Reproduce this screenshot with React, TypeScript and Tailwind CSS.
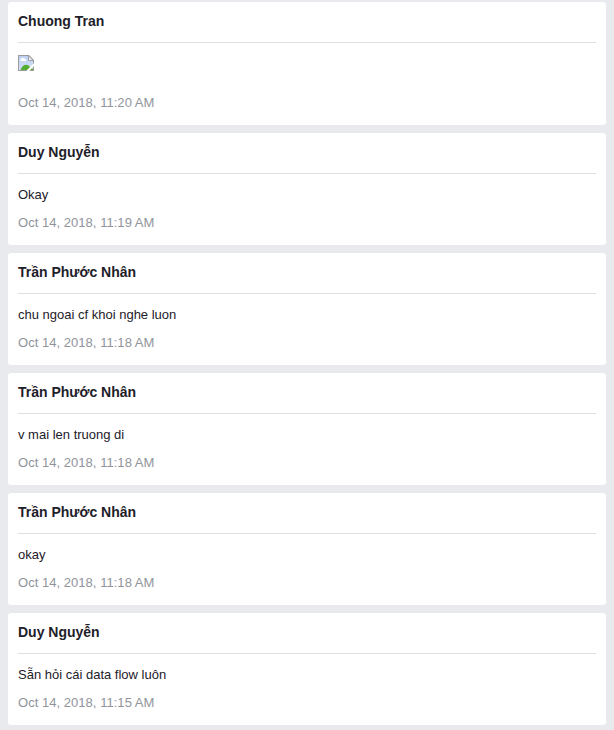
type Message = { sender: string; text?: string; time: string };

const messages: Message[] = [
  { sender: "Chuong Tran", time: "Oct 14, 2018, 11:20 AM" },
  { sender: "Duy Nguyễn", text: "Okay", time: "Oct 14, 2018, 11:19 AM" },
  { sender: "Trần Phước Nhân", text: "chu ngoai cf khoi nghe luon", time: "Oct 14, 2018, 11:18 AM" },
  { sender: "Trần Phước Nhân", text: "v mai len truong di", time: "Oct 14, 2018, 11:18 AM" },
  { sender: "Trần Phước Nhân", text: "okay", time: "Oct 14, 2018, 11:18 AM" },
  { sender: "Duy Nguyễn", text: "Sẵn hỏi cái data flow luôn", time: "Oct 14, 2018, 11:15 AM" },
];

function BrokenImage() {
  return (
    <svg className="block h-4 w-4" viewBox="0 0 16 16">
      <defs>
        <linearGradient id="sky" x1="0" y1="0" x2="0" y2="1">
          <stop offset="0" stopColor="#bfd0f3" />
          <stop offset="1" stopColor="#d3e0fa" />
        </linearGradient>
      </defs>
      <path d="M0 0h11l5 5v11H0z" fill="#9b9b9b" />
      <path d="M1 1h9.6L15 5.4V15H1z" fill="url(#sky)" />
      <path d="M10.500 .8V5.500h4.700z" fill="#f2f2f2" stroke="#9b9b9b" strokeWidth=".9" />
      <path d="M2.500 6a1.300 1.300 0 0 1 .7-2 1.800 1.800 0 0 1 3.400-.2A1.300 1.300 0 0 1 7.800 6z" fill="#fff" />
      <path d="M2.500 15q1.500-4.500 5-5.200 3-.2 4.500 2.200l3 2v1z" fill="#55ad36" />
      <path d="M16 8v3L11.500 15.800V16H8.200z" fill="#fff" />
    </svg>
  );
}

function Card({ message }: { message: Message }) {
  return (
    <article className="rounded-[3px] bg-white px-2.5">
      <h2 className="h-[41px] border-b border-[#dddfe2] pt-[10px] text-sm leading-[18px] font-bold text-[#1d2129]">
        {message.sender}
      </h2>
      <div className={message.text ? "h-10 pt-3 text-[13px] leading-[18px] text-[#1d2129]" : "h-[51px] pt-3"}>
        {message.text ?? <BrokenImage />}
      </div>
      <p className="h-[31px] text-[13px] leading-[18px] tracking-[0.035px] text-[#90949c]">{message.time}</p>
    </article>
  );
}

export default function App() {
  return (
    <main className="flex h-[730px] flex-col gap-2 overflow-hidden bg-[#e9eaed] px-2 pt-[2px] font-['Liberation_Sans',Arial,sans-serif]">
      {messages.map((message, index) => (
        <Card key={index} message={message} />
      ))}
    </main>
  );
}
